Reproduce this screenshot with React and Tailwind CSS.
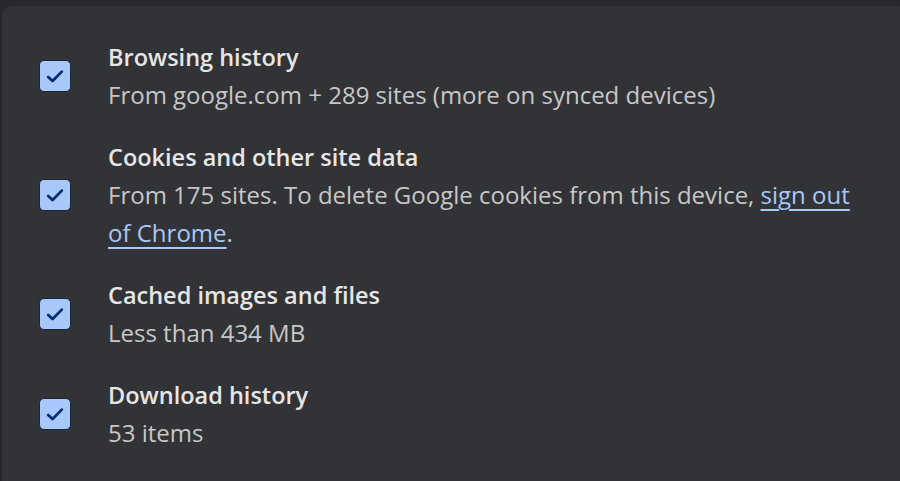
import React from "react";

function Check() {
  return (
    <div className="w-[32px] h-[32px] shrink-0 rounded-[5px] bg-[#a8c7fa] border-[1.5px] border-[#1c2536] flex items-center justify-center">
      <svg width="22" height="22" viewBox="0 0 20 20" fill="none">
        <path d="M3.8 10.8 L7.8 14.6 L16.2 6" stroke="#062e6f" strokeWidth="2.5" strokeLinecap="round" strokeLinejoin="round" />
      </svg>
    </div>
  );
}

function Row({ title, children }) {
  return (
    <div className="flex items-center py-[12px]">
      <div className="w-[106px] shrink-0 pl-[37px]">
        <Check />
      </div>
      <div className="flex flex-col text-[24px] leading-[38px]">
        <div className="font-semibold text-[23.5px] text-[#e6e6e6]">{title}</div>
        <div className="text-[#c7c7c7]">{children}</div>
      </div>
    </div>
  );
}

export default function App() {
  return (
    <div className="w-[900px] h-[481px] bg-[#27282b] pt-[6px] pl-[2px] overflow-hidden" style={{ fontFamily: '"Open Sans", "Noto Sans", sans-serif' }}>
      <div className="h-full w-[910px] bg-[#323337] rounded-tl-[10px] rounded-tr-[14px] pt-[20px]">
        <Row title="Browsing history">From google.com + 289 sites (more on synced devices)</Row>
        <Row title="Cookies and other site data">
          <div className="w-[760px]">
            From 175 sites. To delete Google cookies from this device,{" "}
            <a className="text-[#a8c7fa] underline underline-offset-[5px] decoration-[1.5px]">sign out of Chrome</a>.
          </div>
        </Row>
        <Row title="Cached images and files">Less than 434 MB</Row>
        <Row title="Download history">53 items</Row>
      </div>
    </div>
  );
}
